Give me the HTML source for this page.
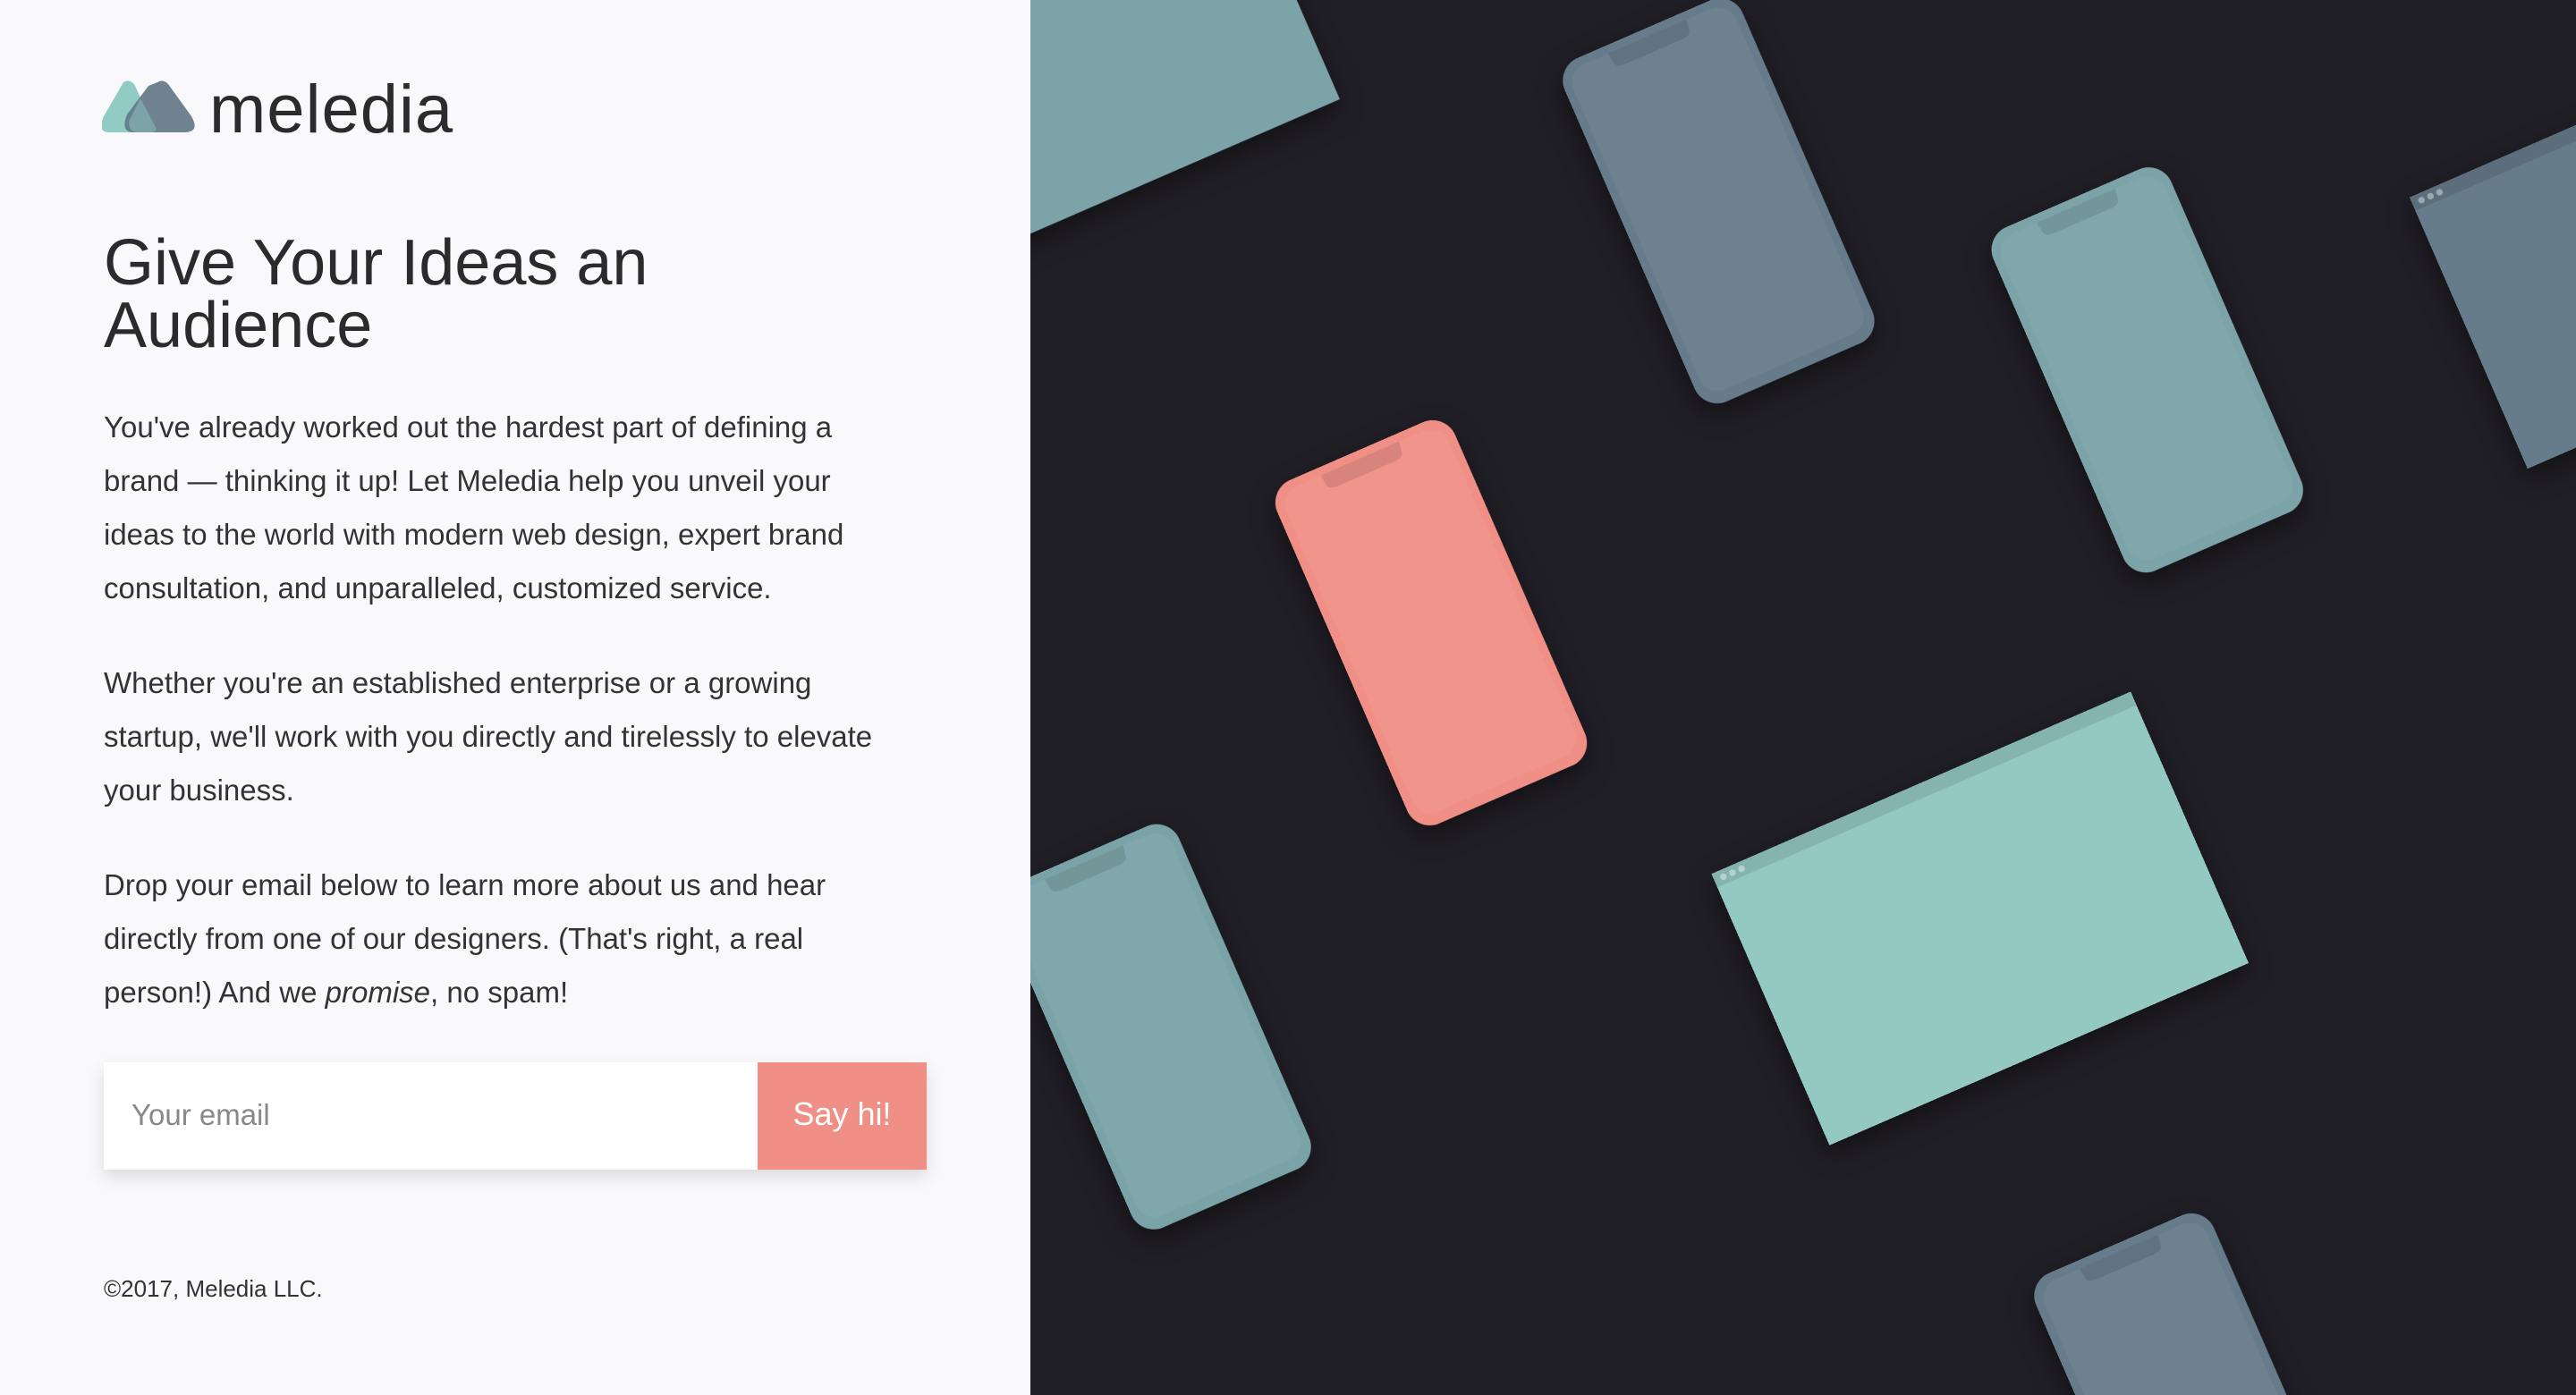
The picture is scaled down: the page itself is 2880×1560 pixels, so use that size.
<!DOCTYPE html>
<html><head><meta charset="utf-8"><style>
*{margin:0;padding:0;box-sizing:border-box}
html,body{width:2880px;height:1560px;overflow:hidden}
body{background:#211f26;font-family:"Liberation Sans",sans-serif;position:relative}
#left{position:absolute;left:0;top:0;width:1152px;height:1560px;background:#f9f9fc}
.abs{position:absolute;left:116px;color:#333}
.p{font-size:33px;line-height:60px;color:#333}
</style></head><body>
<div id="left">
 <svg class="abs" style="top:90px;left:114px" width="106" height="60" viewBox="0 0 106 60">
  <path d="M24 2 Q30 -2 36 4 L52 38 Q58 58 40 58 L8 58 Q-6 58 2 40 Z" fill="#92cbc3"/>
  <path d="M62 2 Q68 -2 74 4 L100 40 Q110 58 92 58 L36 58 Q20 58 28 38 L52 6 Z" fill="#667b8a" opacity=".95"/>
  <path d="M43 20 L60 52 Q62 58 54 58 L40 58 Q30 58 30 46 Z" fill="#7ba3a8"/>
 </svg>
 <div class="abs" style="top:80px;left:234px;font-size:76px;line-height:86px;letter-spacing:1px;color:#2b2b2b">meledia</div>
 <div class="abs" style="top:259px;font-size:72px;line-height:70px;color:#2b2b2b">Give Your Ideas an<br>Audience</div>
 <div class="abs p" style="top:448px">You've already worked out the hardest part of defining a<br>brand — thinking it up! Let Meledia help you unveil your<br>ideas to the world with modern web design, expert brand<br>consultation, and unparalleled, customized service.</div>
 <div class="abs p" style="top:734px">Whether you're an established enterprise or a growing<br>startup, we'll work with you directly and tirelessly to elevate<br>your business.</div>
 <div class="abs p" style="top:960px">Drop your email below to learn more about us and hear<br>directly from one of our designers. (That's right, a real<br>person!) And we <i>promise</i>, no spam!</div>
 <div class="abs" style="top:1188px;width:920px;height:120px;background:#fff;box-shadow:0 8px 16px rgba(0,0,0,.12)">
  <div style="position:absolute;left:31px;top:40px;font-size:33px;color:#888">Your email</div>
  <div style="position:absolute;left:731px;top:0;width:189px;height:120px;background:#f08f86;color:#fff;font-size:36px;line-height:116px;text-align:center">Say hi!</div>
 </div>
 <div class="abs" style="top:1426px;font-size:26px">©2017, Meledia LLC.</div>
</div>
<svg style="position:absolute;left:1152px;top:0;overflow:hidden" width="1728" height="1560" viewBox="627 0 941 849">
 <defs>
  <filter id="sh" x="-30%" y="-30%" width="160%" height="160%"><feDropShadow dx="0" dy="6" stdDeviation="8" flood-color="#000" flood-opacity=".45"/></filter>
  <g id="phone"><rect x="-59" y="-114" width="118" height="228" rx="15"/><rect x="-54" y="-109" width="108" height="216" rx="12" fill="#fff" opacity=".05"/><path d="M-26 -109 L26 -109 L25 -102 Q24 -99 19 -99 L-19 -99 Q-24 -99 -25 -102 Z" fill="#000" opacity=".1"/></g>
  <g id="brow"><rect x="-139" y="-90" width="278" height="180"/><rect x="-139" y="-90" width="278" height="9" fill="#000" opacity=".1"/><circle cx="-133" cy="-85.5" r="2" fill="#fff" opacity=".4"/><circle cx="-127" cy="-85.5" r="2" fill="#fff" opacity=".4"/><circle cx="-121" cy="-85.5" r="2" fill="#fff" opacity=".4"/></g>
 </defs>
 <g filter="url(#sh)">
  <use href="#brow" transform="translate(652,33) rotate(-23.5)" fill="#7ba3a8"/>
  <use href="#brow" transform="translate(1630,147) rotate(-23.5)" fill="#667b8a"/>
  <use href="#brow" transform="translate(1205,559) rotate(-23.5)" fill="#93c9c1"/>
  <use href="#phone" transform="translate(1046,122) rotate(-23.5)" fill="#667b8a"/>
  <use href="#phone" transform="translate(1307,225) rotate(-23.5)" fill="#7ba3a8"/>
  <use href="#phone" transform="translate(871,379) rotate(-23.5)" fill="#f08f86"/>
  <use href="#phone" transform="translate(703,625) rotate(-23.5)" fill="#7aa3a7"/>
  <use href="#phone" transform="translate(1333,862) rotate(-23.5)" fill="#667b8a"/>
 </g>
</svg>
</body></html>
